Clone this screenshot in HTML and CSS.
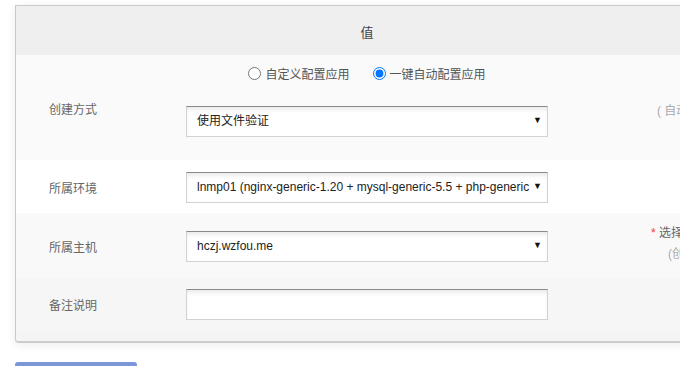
FILE: index.html
```html
<!DOCTYPE html>
<html lang="zh-CN">
<head>
    <meta charset="UTF-8">
    <meta name="viewport" content="width=device-width, initial-scale=1.0">
    <title>新建站点</title>
    <link rel="stylesheet" href="styles.css">
</head>
<body>

    <div class="panel">
        <div class="panel-head">
            <div class="col-label"></div>
            <div class="col-value head-title">值</div>
            <div class="col-desc"></div>
        </div>

        <div class="form-row row-create">
            <div class="col-label label-top">创建方式</div>
            <div class="col-value">
                <div class="radio-line">
                    <label class="radio"><input type="radio" name="mode" value="custom">自定义配置应用</label>
                    <label class="radio"><input type="radio" name="mode" value="auto" checked>一键自动配置应用</label>
                </div>
                <div class="select-box">
                    <select>
                        <option>使用文件验证</option>
                        <option>使用DNS验证</option>
                    </select>
                    <span class="arrow">&#9660;</span>
                </div>
            </div>
            <div class="col-desc desc-top"><span class="muted">( 自动配置应用会同时创建证书 )</span></div>
        </div>

        <div class="form-row row-env">
            <div class="col-label">所属环境</div>
            <div class="col-value">
                <div class="select-box">
                    <select>
                        <option>lnmp01 (nginx-generic-1.20 + mysql-generic-5.5 + php-generic-7.4)</option>
                    </select>
                    <span class="arrow">&#9660;</span>
                </div>
            </div>
            <div class="col-desc"></div>
        </div>

        <div class="form-row row-host">
            <div class="col-label">所属主机</div>
            <div class="col-value">
                <div class="select-box">
                    <select>
                        <option>hczj.wzfou.me</option>
                    </select>
                    <span class="arrow">&#9660;</span>
                </div>
            </div>
            <div class="col-desc desc-host">
                <div><span class="required">*</span> 选择站点所在主机</div>
                <div class="muted indent">(创建后不可修改)</div>
            </div>
        </div>

        <div class="form-row row-note">
            <div class="col-label">备注说明</div>
            <div class="col-value">
                <input type="text" class="text-input">
            </div>
            <div class="col-desc"></div>
        </div>

        <div class="panel-foot"></div>
    </div>

    <button class="btn-submit">提交</button>

</body>
</html>
```

FILE: styles.css
```css
* {
    box-sizing: border-box;
}

html, body {
    height: 100%;
}

body {
    margin: 0;
    padding: 5px 0 0 15px;
    background-color: #fff;
    color: #666;
    font-family: "Liberation Sans", "Noto Sans CJK SC", sans-serif;
    font-size: 12px;
    overflow: hidden;
    width: 680px;
}

.panel {
    width: 760px;
    border: 1px solid #c9c9c9;
    border-right: none;
    border-bottom: 2px solid #cdcdcd;
    border-radius: 0 0 0 4px;
    box-shadow: 0 2px 10px rgba(0, 0, 0, 0.08);
    background-color: #f5f5f5;
}

.panel-head,
.form-row {
    display: grid;
    grid-template-columns: 170px 362px 1fr;
}

.panel-head {
    height: 49px;
    align-items: center;
    background-color: #efefef;
}

.head-title {
    text-align: center;
    color: #444;
    font-size: 13px;
    padding-top: 2px;
}

.col-label {
    padding-left: 33px;
    color: #666;
}

.col-desc {
    padding-left: 103px;
    white-space: nowrap;
}

.form-row {
    align-items: center;
}

.row-create {
    background-color: #fafafa;
    padding: 8px 0 23px;
    align-items: start;
}

.label-top {
    padding-top: 37px;
}

.desc-top {
    padding-top: 38px;
    padding-left: 109px;
}

.row-env {
    background-color: #fff;
    padding: 12px 0 10px;
}

.row-host {
    background-color: #f9f9f9;
    padding: 18px 0 16px;
}

.desc-host {
    align-self: start;
    margin-top: -8px;
    margin-bottom: -3px;
    line-height: 21px;
    color: #666;
}

.row-note {
    background-color: #f6f6f6;
    padding: 11px 0 11px;
}

.panel-foot {
    height: 10px;
    background-color: #f4f4f4;
    border-radius: 0 0 0 4px;
}

.radio-line {
    display: flex;
    justify-content: center;
    align-items: center;
    gap: 23px;
    height: 20px;
    margin-bottom: 23px;
}

.radio {
    display: flex;
    align-items: center;
    color: #555;
    cursor: pointer;
}

.radio input {
    width: 13px;
    height: 13px;
    margin: 0 4px 0 0;
}

.select-box {
    position: relative;
    width: 362px;
}

.select-box select,
.text-input {
    display: block;
    width: 100%;
    height: 31px;
    padding: 0 18px 2px 10px;
    border: 1px solid #d2d2d2;
    border-top-color: #8a8a8a;
    border-radius: 0;
    background-color: #fff;
    box-shadow: inset 0 4px 5px -2px rgba(0, 0, 0, 0.1);
    color: #222;
    font-family: "Liberation Sans", "Noto Sans CJK SC", sans-serif;
    font-size: 12px;
    -webkit-appearance: none;
    appearance: none;
    outline: none;
}

.arrow {
    position: absolute;
    right: 6px;
    top: 9px;
    font-size: 9px;
    color: #111;
    pointer-events: none;
}

.muted {
    color: #aaa;
}

.indent {
    padding-left: 17px;
}

.required {
    color: #f33;
}

.btn-submit {
    display: block;
    width: 122px;
    height: 32px;
    margin-top: 19px;
    border: none;
    border-radius: 3px;
    background-color: #7b97d8;
    color: #fff;
    font-size: 13px;
}
```
